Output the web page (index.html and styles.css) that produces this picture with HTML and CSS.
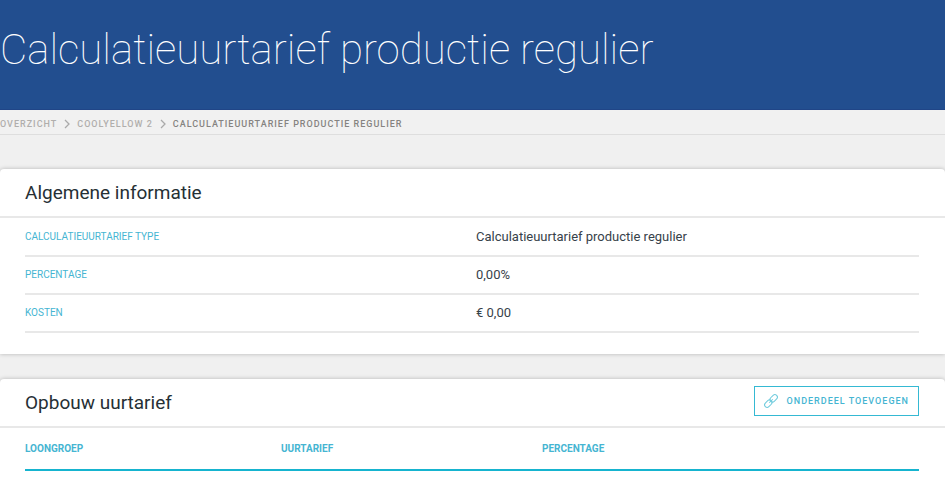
FILE: index.html
```html
<!DOCTYPE html>
<html lang="nl">
<head>
<meta charset="utf-8">
<meta name="viewport" content="width=device-width, initial-scale=1">
<title>Calculatieuurtarief productie regulier</title>
<link rel="stylesheet" href="styles.css">
</head>
<body>
<header class="hero">
  <h1 class="hero-title">Calculatieuurtarief productie regulier</h1>
</header>
<nav class="breadcrumb">
  <a class="crumb" href="#">Overzicht</a>
  <svg class="chevron" viewBox="0 0 6 10" aria-hidden="true"><path d="M1 1l4 4-4 4"/></svg>
  <a class="crumb" href="#">Coolyellow 2</a>
  <svg class="chevron" viewBox="0 0 6 10" aria-hidden="true"><path d="M1 1l4 4-4 4"/></svg>
  <span class="crumb crumb-current">Calculatieuurtarief productie regulier</span>
</nav>
<main class="content">
  <section class="card">
    <div class="card-header">
      <h2 class="card-title">Algemene informatie</h2>
    </div>
    <dl class="details">
      <div class="detail"><dt>Calculatieuurtarief type</dt><dd>Calculatieuurtarief productie regulier</dd></div>
      <div class="detail"><dt>Percentage</dt><dd>0,00%</dd></div>
      <div class="detail"><dt>Kosten</dt><dd>€ 0,00</dd></div>
    </dl>
  </section>
  <section class="card card-last">
    <div class="card-header">
      <h2 class="card-title">Opbouw uurtarief</h2>
      <button class="add-button" type="button">
        <svg class="link-icon" viewBox="0 0 14 14" aria-hidden="true"><g transform="rotate(-45 7 7)"><rect x="-1" y="4.5" width="8.4" height="5" rx="2.5"/><rect x="6.6" y="4.5" width="8.4" height="5" rx="2.5"/><path d="M4.5 7h5"/></g></svg>
        <span>Onderdeel toevoegen</span>
      </button>
    </div>
    <div class="table-wrap">
      <table class="parts">
        <thead>
          <tr><th class="col-group" scope="col">Loongroep</th><th class="col-rate" scope="col">Uurtarief</th><th scope="col">Percentage</th></tr>
        </thead>
      </table>
    </div>
  </section>
</main>
</body>
</html>
```
FILE: styles.css
```css
* {
  box-sizing: border-box;
}

body {
  margin: 0;
  background: #f0f0f0;
  color: #37424a;
  font-family: Roboto, "Liberation Sans", sans-serif;
  font-size: 13px;
  line-height: 20px;
}

h1, h2, dl, dd {
  margin: 0;
}

.hero {
  padding: 22px 0 32px;
  background: #224e8f;
  border-bottom: 1px solid #204587;
}

.hero-title {
  color: #fff;
  font-size: 42px;
  font-weight: 100;
  line-height: 55px;
}

.breadcrumb {
  display: flex;
  align-items: center;
  gap: 7px;
  padding: 4px 0 0;
  border-bottom: 1px solid #dedede;
  background: #f1f1f1;
}

.crumb {
  color: #b0aeac;
  font-size: 9px;
  font-weight: 500;
  letter-spacing: 1px;
  text-decoration: none;
  text-transform: uppercase;
}

.crumb-current {
  color: #858380;
}

.chevron {
  width: 6px;
  height: 10px;
  fill: none;
  stroke: #aaa;
  stroke-width: 1.3;
}

.content {
  padding-top: 34px;
}

.card {
  margin-bottom: 25px;
  padding-bottom: 21px;
  background: #fff;
  border-radius: 4px 4px 0 0;
  box-shadow: 0 0 4px rgba(0, 0, 0, 0.25);
}

.card-header {
  display: flex;
  align-items: center;
  justify-content: space-between;
  height: 49px;
  padding: 0 26px 0 25px;
  border-bottom: 2px solid #e8e8e8;
}

.card-title {
  color: #263035;
  font-size: 19px;
  font-weight: 400;
  line-height: 24px;
}

.details {
  padding: 1px 26px 0 25px;
}

.detail {
  display: grid;
  grid-template-columns: 451px 1fr;
  padding: 8px 0;
  border-bottom: 2px solid #e8e8e8;
}

.detail dt,
.parts th {
  color: #45b5d2;
  font-size: 10px;
  text-transform: uppercase;
}

.add-button {
  display: flex;
  align-items: center;
  gap: 9px;
  height: 30px;
  margin-bottom: 4px;
  padding: 0 9px;
  border: 1px solid #35b9d3;
  background: #fff;
  color: #45b5d2;
  font: 500 9px/20px Roboto, "Liberation Sans", sans-serif;
  letter-spacing: 1px;
  text-transform: uppercase;
}

.link-icon {
  width: 14px;
  height: 14px;
  fill: none;
  stroke: #6fcbdd;
  overflow: visible;
}

.card-last {
  margin-bottom: 0;
}

.table-wrap {
  padding: 0 26px 0 25px;
}

.parts {
  width: 100%;
  border-collapse: collapse;
  table-layout: fixed;
}

.parts th {
  height: 42px;
  padding: 0;
  border-bottom: 2px solid #16b4cf;
  font-weight: 700;
  text-align: left;
}

.parts .col-group {
  width: 256px;
}

.parts .col-rate {
  width: 261px;
}
```
